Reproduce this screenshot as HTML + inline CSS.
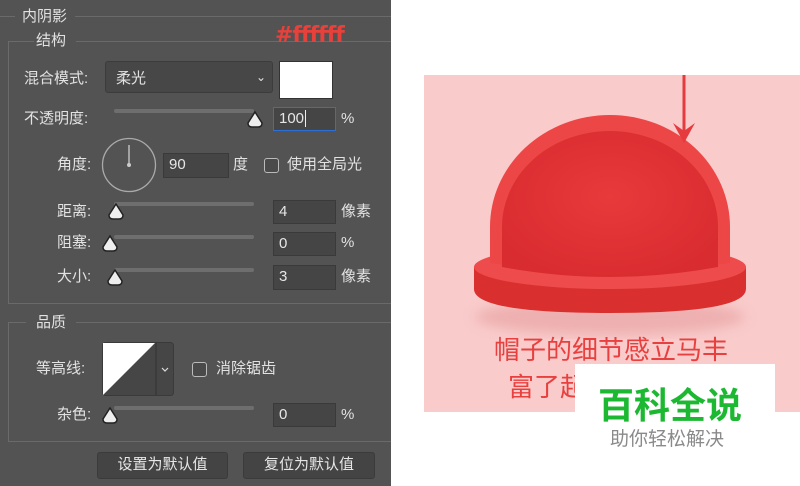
<!DOCTYPE html>
<html><head><meta charset="utf-8"><style>
*{margin:0;padding:0;box-sizing:border-box}
body{width:800px;height:486px;background:#fff;position:relative;overflow:hidden;font-family:"Liberation Sans","Noto Sans CJK SC",sans-serif}
.panel{position:absolute;left:0;top:0;width:391px;height:486px;background:#535353}
.a{position:absolute;color:#e2e2e2;font-size:15px;line-height:18px;white-space:nowrap}
.ln{position:absolute;background:#6a6a6a}
.inp{position:absolute;background:#454545;border:1px solid #3a3a3a;color:#e6e6e6;font-size:15px;padding-left:5px;line-height:22px}
.track{position:absolute;height:4px;background:#6e6e6e;border-radius:2px}
.cb{position:absolute;width:15px;height:15px;border:1.5px solid #bbb;border-radius:3px;background:#4a4a4a}
.btn{position:absolute;border:1px solid #3b3b3b;background:#444;color:#e6e6e6;font-size:15px;text-align:center;line-height:24px;border-radius:3px}
</style></head><body>
<div class="panel">
<div class="ln" style="left:0;top:16px;width:15px;height:1px"></div>
<div class="ln" style="left:75px;top:16px;width:316px;height:1px"></div>
<div class="a" style="left:22px;top:8px">内阴影</div>
<div class="ln" style="left:8px;top:41px;width:26px;height:1px"></div>
<div class="ln" style="left:76px;top:41px;width:315px;height:1px"></div>
<div class="ln" style="left:8px;top:41px;width:1px;height:263px"></div>
<div class="ln" style="left:8px;top:303px;width:383px;height:1px"></div>
<div class="a" style="left:36px;top:32px">结构</div>
<div class="a" style="left:275px;top:24px;color:#e8403b;font-size:22px;line-height:24px;font-weight:bold;font-family:'DejaVu Sans',sans-serif;letter-spacing:-1px">#ffffff</div>
<div class="a" style="left:24px;top:70px">混合模式:</div>
<div style="position:absolute;left:105px;top:61px;width:168px;height:32px;background:#474747;border:1px solid #3c3c3c;border-radius:3px"></div>
<div class="a" style="left:116px;top:70px">柔光</div>
<div class="a" style="left:256px;top:68px;font-size:12px">⌄</div>
<div style="position:absolute;left:279px;top:61px;width:54px;height:38px;background:#fff;border:1px solid #333"></div>
<div class="a" style="left:24px;top:110px">不透明度:</div>
<div class="track" style="left:114px;top:109px;width:140px"></div>
<svg style="position:absolute;left:246px;top:110px" width="18" height="20"><path d="M9 2 L16 13 Q16 17 12 17 L6 17 Q2 17 2 13 Z" fill="#eee" stroke="#222" stroke-width="1.5"/></svg>
<div class="inp" style="left:273px;top:107px;width:63px;height:24px;border:1px solid #2d6fd8">100<span style="border-left:1.5px solid #eee;margin-left:1px"></span></div>
<div class="a" style="left:341px;top:110px">%</div>
<div class="a" style="left:57px;top:156px">角度:</div>
<svg style="position:absolute;left:101px;top:137px" width="56" height="56"><circle cx="28" cy="28" r="26.5" fill="none" stroke="#aaa" stroke-width="1.3"/><line x1="28" y1="8" x2="28" y2="28" stroke="#ccc" stroke-width="1.3"/><circle cx="28" cy="28" r="2" fill="#ccc"/></svg>
<div class="inp" style="left:163px;top:153px;width:66px;height:25px">90</div>
<div class="a" style="left:233px;top:156px">度</div>
<div class="cb" style="left:264px;top:158px"></div>
<div class="a" style="left:287px;top:156px">使用全局光</div>
<div class="a" style="left:57px;top:203px">距离:</div>
<div class="track" style="left:114px;top:202px;width:140px"></div>
<svg style="position:absolute;left:107px;top:202px" width="18" height="20"><path d="M9 2 L16 13 Q16 17 12 17 L6 17 Q2 17 2 13 Z" fill="#eee" stroke="#222" stroke-width="1.5"/></svg>
<div class="inp" style="left:273px;top:200px;width:63px;height:24px">4</div>
<div class="a" style="left:341px;top:203px">像素</div>
<div class="a" style="left:57px;top:234px">阻塞:</div>
<div class="track" style="left:114px;top:235px;width:140px"></div>
<svg style="position:absolute;left:101px;top:234px" width="18" height="20"><path d="M9 2 L16 13 Q16 17 12 17 L6 17 Q2 17 2 13 Z" fill="#eee" stroke="#222" stroke-width="1.5"/></svg>
<div class="inp" style="left:273px;top:232px;width:63px;height:24px">0</div>
<div class="a" style="left:341px;top:234px">%</div>
<div class="a" style="left:57px;top:268px">大小:</div>
<div class="track" style="left:114px;top:268px;width:140px"></div>
<svg style="position:absolute;left:106px;top:268px" width="18" height="20"><path d="M9 2 L16 13 Q16 17 12 17 L6 17 Q2 17 2 13 Z" fill="#eee" stroke="#222" stroke-width="1.5"/></svg>
<div class="inp" style="left:273px;top:265px;width:63px;height:25px">3</div>
<div class="a" style="left:341px;top:268px">像素</div>
<div class="ln" style="left:8px;top:322px;width:18px;height:1px"></div>
<div class="ln" style="left:76px;top:322px;width:315px;height:1px"></div>
<div class="ln" style="left:8px;top:322px;width:1px;height:120px"></div>
<div class="ln" style="left:8px;top:441px;width:383px;height:1px"></div>
<div class="a" style="left:36px;top:314px">品质</div>
<div class="a" style="left:36px;top:360px">等高线:</div>
<svg style="position:absolute;left:102px;top:342px" width="72" height="54"><rect x="0.5" y="0.5" width="71" height="53" rx="3" fill="#464646" stroke="#3a3a3a"/><path d="M1 53 L1 1 L53 1 Z" fill="#fff"/><line x1="54" y1="1" x2="54" y2="53" stroke="#333"/><path d="M60 26 L63 29 L66 26" fill="none" stroke="#ddd" stroke-width="1.2"/></svg>
<div class="cb" style="left:192px;top:362px"></div>
<div class="a" style="left:216px;top:360px">消除锯齿</div>
<div class="a" style="left:57px;top:406px">杂色:</div>
<div class="track" style="left:114px;top:406px;width:140px"></div>
<svg style="position:absolute;left:101px;top:406px" width="18" height="20"><path d="M9 2 L16 13 Q16 17 12 17 L6 17 Q2 17 2 13 Z" fill="#eee" stroke="#222" stroke-width="1.5"/></svg>
<div class="inp" style="left:273px;top:403px;width:63px;height:24px">0</div>
<div class="a" style="left:341px;top:406px">%</div>
<div class="btn" style="left:97px;top:452px;width:131px;height:27px">设置为默认值</div>
<div class="btn" style="left:243px;top:452px;width:132px;height:27px">复位为默认值</div>
</div>
<div style="position:absolute;left:424px;top:75px;width:376px;height:337px;background:#f9cbcb"></div>
<svg style="position:absolute;left:424px;top:75px" width="376" height="337">
<defs><radialGradient id="g" cx="0.5" cy="0.45" r="0.6"><stop offset="0" stop-color="#e8393b"/><stop offset="1" stop-color="#d92c30"/></radialGradient>
<filter id="b"><feGaussianBlur stdDeviation="6"/></filter></defs>
<ellipse cx="186" cy="242" rx="135" ry="18" fill="#e59a9a" opacity="0.55" filter="url(#b)"/>
<path d="M50 192 Q186 170 322 192 L322 214 Q322 238 186 238 Q50 238 50 214 Z" fill="#d9302f"/>
<ellipse cx="186" cy="192" rx="136" ry="22" fill="#ee4c4c"/>
<path d="M66 188 L66 152 A120 112 0 0 1 306 152 L306 188 Q186 206 66 188 Z" fill="#ec4646"/>
<path d="M78 192 L78 152 A108 96 0 0 1 294 152 L294 192 Q186 212 78 192 Z" fill="url(#g)"/>
<line x1="260" y1="0" x2="260" y2="62" stroke="#e53a3e" stroke-width="3"/>
<path d="M249 48 L260 68 L271 48 L260 56 Z" fill="#e53a3e"/>
<text x="187" y="284" text-anchor="middle" font-size="26" fill="#e8403f" font-family="Liberation Sans,Noto Sans CJK SC,sans-serif">帽子的细节感立马丰</text>
<text x="84" y="321" font-size="26" fill="#e8403f" font-family="Liberation Sans,Noto Sans CJK SC,sans-serif">富了起来</text>
</svg>
<div style="position:absolute;left:575px;top:364px;width:200px;height:122px;background:#fff"></div>
<div style="position:absolute;left:598px;top:381px;font-size:36px;line-height:44px;color:#1db832;font-weight:bold;font-family:'Noto Sans CJK SC',sans-serif">百科全说</div>
<div style="position:absolute;left:610px;top:425px;font-size:19px;line-height:26px;color:#8a8a8a;font-family:'Noto Sans CJK SC',sans-serif">助你轻松解决</div>
</body></html>
